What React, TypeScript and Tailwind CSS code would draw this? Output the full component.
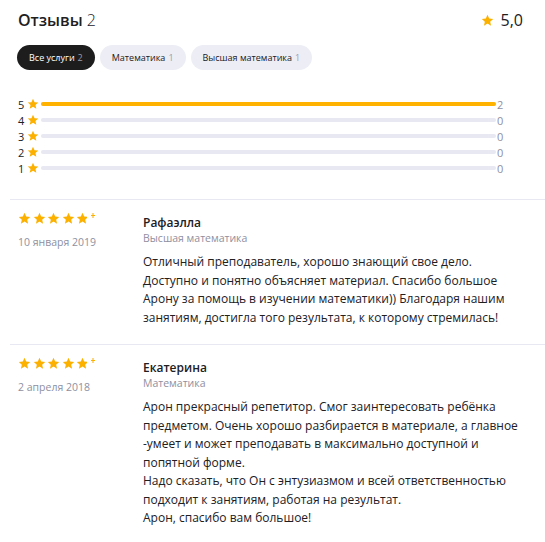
import React from "react";

// ============================================================
// Data
// ============================================================

const tabs = [
  { label: "Все услуги", count: 2, active: true },
  { label: "Математика", count: 1, active: false },
  { label: "Высшая математика", count: 1, active: false },
];

const bars = [
  { stars: 5, count: 2 },
  { stars: 4, count: 0 },
  { stars: 3, count: 0 },
  { stars: 2, count: 0 },
  { stars: 1, count: 0 },
];

const reviews = [
  {
    name: "Рафаэлла",
    service: "Высшая математика",
    date: "10 января 2019",
    text: [
      "Отличный преподаватель, хорошо знающий свое дело. Доступно и понятно объясняет материал. Спасибо большое Арону за помощь в изучении математики)) Благодаря нашим занятиям, достигла того результата, к которому стремилась!",
    ],
  },
  {
    name: "Екатерина",
    service: "Математика",
    date: "2 апреля 2018",
    text: [
      "Арон прекрасный репетитор. Смог заинтересовать ребёнка предметом. Очень хорошо разбирается в материале, а главное -умеет и может преподавать в максимально доступной и попятной форме.",
      "Надо сказать, что Он с энтузиазмом и всей ответственностью подходит к занятиям, работая на результат.",
      "Арон, спасибо вам большое!",
    ],
  },
];

const FONT = "font-['Segoe_UI','Open_Sans','Noto_Sans',sans-serif]";

// ============================================================
// Star
// ============================================================

function Star({ size = 11, className = "" }: { size?: number; className?: string }) {
  return (
    <svg width={size} height={size} viewBox="0 0 24 24" className={`shrink-0 ${className}`}>
      <path
        fill="#fcb000"
        d="M12 1.5l3.1 6.9 7.4.7-5.6 5 1.7 7.4L12 17.6l-6.6 3.9 1.7-7.4-5.6-5 7.4-.7z"
      />
    </svg>
  );
}

function BrokenStar() {
  // пятая звезда — обрезана, с маленьким осколком справа
  return (
    <span className="relative inline-flex w-[20px] h-[13px]">
      <span className="overflow-hidden w-[10.5px] h-[13px] inline-flex">
        <Star size={13} />
      </span>
      <span className="absolute left-[15px] top-[1px]">
        <svg width="4" height="5" viewBox="0 0 4 5">
          <path fill="#fcb000" d="M1.5 0h1v2h1.5v1H2.5v2h-1V3H0V2h1.5z" />
        </svg>
      </span>
    </span>
  );
}

// ============================================================
// App
// ============================================================

export default function App() {
  return (
    <div className={`${FONT} bg-white w-[545px] h-[542px] overflow-hidden text-[#21201f]`}>
      {/* Заголовок */}
      <div className="flex items-center justify-between pl-[18px] pr-[22px] pt-[8px] h-[32px]">
        <h2 className="text-[16px] leading-none">
          <span className="font-semibold">Отзывы</span>{" "}
          <span className="font-light">2</span>
        </h2>
        <div className="flex items-center gap-[7px] text-[16px] leading-none">
          <Star size={13} />
          <span>5,0</span>
        </div>
      </div>

      {/* Вкладки */}
      <div className="flex gap-[5px] pl-[17px] mt-[13px]">
        {tabs.map((t) => (
          <span
            key={t.label}
            className={`h-[25px] px-[12px] rounded-full inline-flex items-center text-[9px] ${
              t.active ? "bg-[#1d1d1d] text-white" : "bg-[#edeef5] text-[#21201f]"
            }`}
          >
            {t.label}
            <span className="ml-[3px] text-[#9c9caa]">{t.count}</span>
          </span>
        ))}
      </div>

      {/* Распределение оценок */}
      <div className="mt-[28px] pl-[18px] pr-[41px] flex flex-col gap-[4px]">
        {bars.map((b) => (
          <div key={b.stars} className="flex items-center h-[12px] text-[11px] leading-none">
            <span className="w-[8px] text-[#21201f]">{b.stars}</span>
            <Star size={12} className="ml-[1px]" />
            <div className="ml-[2px] flex-1 h-[4px] rounded-full bg-[#e8e8f2]">
              {b.count > 0 && <div className="h-full rounded-full bg-[#ffb300] w-full" />}
            </div>
            <span className="w-[7px] ml-[1px] text-[#8f8fa0] text-[11px]">{b.count}</span>
          </div>
        ))}
      </div>

      {/* Отзывы */}
      <div className="mt-[25px] pl-[10px]">
        {reviews.map((r) => (
          <div key={r.name} className="border-t border-[#e8e8f2] flex pt-[12px] pb-[17px]">
            <div className="w-[133px] pl-[8px] shrink-0">
              <div className="flex items-center gap-[1.5px] h-[13px]">
                <Star size={13} />
                <Star size={13} />
                <Star size={13} />
                <Star size={13} />
                <BrokenStar />
              </div>
              <div className="mt-[10px] text-[10.5px] leading-[15px] text-[#8f8fa0]">{r.date}</div>
            </div>
            <div className="flex-1 pr-[20px]">
              <div className="text-[12px] font-semibold leading-[16px] mt-[3px]">{r.name}</div>
              <div className="text-[10.5px] text-[#8f8fa0] leading-[14px]">{r.service}</div>
              <div className="mt-[8px] text-[12px] leading-[18.5px]">
                {r.text.map((p, i) => (
                  <p key={i}>{p}</p>
                ))}
              </div>
            </div>
          </div>
        ))}
      </div>
    </div>
  );
}
